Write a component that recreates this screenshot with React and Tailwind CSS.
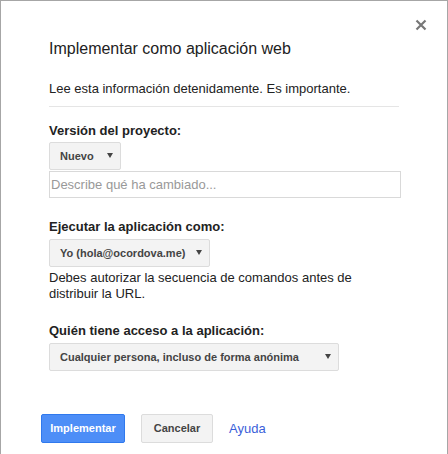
import React from 'react';

function Arrow() {
    return (
        <svg width="6" height="5" viewBox="0 0 6 5" className="-mt-[2px] shrink-0">
            <path d="M0 0H6L3 5Z" fill="#444" />
        </svg>
    );
}

function Select({ label, width }) {
    return (
        <div
            className={`flex h-[28px] ${width} items-center justify-between rounded-[2px] border border-[#dcdcdc] bg-[#f3f3f3] pl-[10px] pr-[7px] text-[11px] font-bold text-[#444]`}
        >
            <span>{label}</span>
            <Arrow />
        </div>
    );
}

export default function App() {
    return (
        <div
            className="relative h-[454px] w-[448px] border-x border-t border-[#a6a6a6] bg-white pl-[48px] pt-[38px] text-[#222]"
            style={{ fontFamily: '"Liberation Sans", Arial, sans-serif' }}
        >
            {/* close */}
            <button className="absolute right-[20px] top-[18px] p-0">
                <svg width="12" height="12" viewBox="0 0 12 12">
                    <path d="M1.5 1.5L10.5 10.5M10.5 1.5L1.5 10.5" stroke="#777" strokeWidth="2.2" />
                </svg>
            </button>

            <h1 className="text-[16px] leading-[20px] font-normal">Implementar como aplicación web</h1>

            <p className="mt-[22px] text-[13px] leading-[16px]">
                Lee esta información detenidamente. Es importante.
            </p>
            <div className="mt-[9px] h-px w-[350px] bg-[#e5e5e5]" />

            <div className="mt-[16px] text-[13px] font-bold leading-[16px]">Versión del proyecto:</div>
            <div className="mt-[3px]">
                <Select label="Nuevo" width="w-[72px]" />
            </div>
            <input
                type="text"
                placeholder="Describe qué ha cambiado..."
                className="mt-[1px] block h-[27px] w-[352px] border border-[#d9d9d9] px-[1px] text-[13px] outline-none placeholder:text-[#999]"
            />

            <div className="mt-[21px] text-[13px] font-bold leading-[16px]">Ejecutar la aplicación como:</div>
            <div className="mt-[4px]">
                <Select label="Yo (hola@ocordova.me)" width="w-[161px]" />
            </div>
            <p className="mt-[3px] w-[350px] text-[13px] leading-[16px]">
                Debes autorizar la secuencia de comandos antes de distribuir la URL.
            </p>

            <div className="mt-[21px] text-[13px] font-bold leading-[16px]">Quién tiene acceso a la aplicación:</div>
            <div className="mt-[4px]">
                <Select label="Cualquier persona, incluso de forma anónima" width="w-[290px]" />
            </div>

            <div className="-ml-[8px] mt-[43px] flex items-center">
                <button className="h-[29px] w-[84px] rounded-[2px] border border-[#3079ed] bg-[#4d8ef7] text-[11px] font-bold text-white">
                    Implementar
                </button>
                <button className="ml-[16px] h-[29px] w-[72px] rounded-[2px] border border-[#dcdcdc] bg-[#f3f3f3] text-[11px] font-bold text-[#444]">
                    Cancelar
                </button>
                <a className="ml-[16px] text-[13px] text-[#3b5fd9]" href="#">
                    Ayuda
                </a>
            </div>
        </div>
    );
}
